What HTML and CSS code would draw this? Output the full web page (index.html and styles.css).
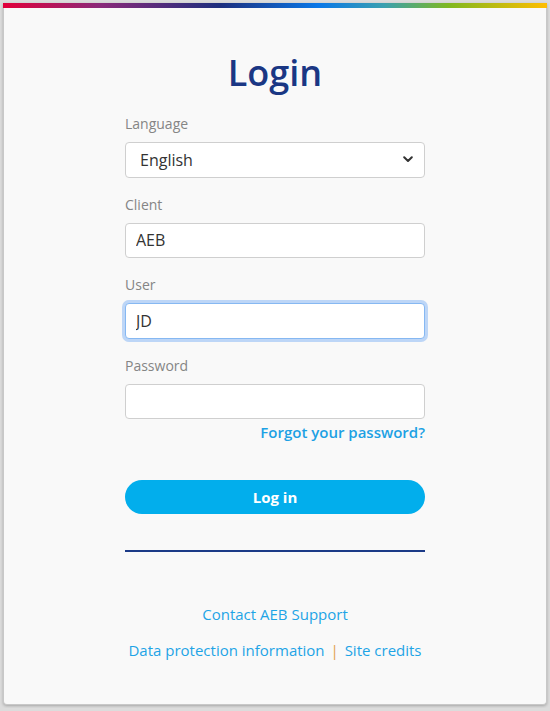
FILE: index.html
```html
<!DOCTYPE html>
<html lang="en">
<head>
  <meta charset="UTF-8" />
  <meta name="viewport" content="width=device-width, initial-scale=1.0" />
  <title>Login - AEB</title>
  <link rel="stylesheet" href="styles.css">
</head>
<body>

  <div class="login-card">
    <div class="rainbow"></div>

    <form class="login-form">
      <h1>Login</h1>

      <!-- Campos -->
      <div class="input-field">
        <label for="language">Language</label>
        <div class="select-wrap">
          <select id="language">
            <option>English</option>
            <option>Deutsch</option>
          </select>
          <svg class="chevron" width="10" height="7" viewBox="0 0 10 7">
            <path d="M1.2 1.2 L5 5 L8.8 1.2" fill="none" stroke="#333" stroke-width="2" stroke-linecap="round" stroke-linejoin="round"/>
          </svg>
        </div>
      </div>

      <div class="input-field">
        <label for="client">Client</label>
        <input type="text" id="client" value="AEB" />
      </div>

      <div class="input-field">
        <label for="user">User</label>
        <input type="text" id="user" class="focused" value="JD" />
      </div>

      <div class="input-field">
        <label for="password">Password</label>
        <input type="password" id="password" />
        <a href="#" class="forgot">Forgot your password?</a>
      </div>

      <button type="submit">Log in</button>

      <hr class="divider" />

      <div class="footer-links">
        <a href="#">Contact AEB Support</a>
        <div class="legal">
          <a href="#">Data protection information</a>
          <span class="sep">|</span>
          <a href="#">Site credits</a>
        </div>
      </div>
    </form>
  </div>

</body>
</html>
```

FILE: styles.css
```css
body {
  font-family: 'Open Sans', 'Liberation Sans', sans-serif;
  background-color: #dcdcdc;
  margin: 0;
  padding: 3px;
}
.login-card {
  background: #f9f9f9;
  border: 1px solid #c8c8c8;
  border-top: none;
  border-radius: 0 0 4px 4px;
  box-shadow: 0 1px 3px rgba(0, 0, 0, 0.25);
  height: 702px;
  box-sizing: border-box;
}
.rainbow {
  height: 5px;
  margin: 0 -1px;
  background: linear-gradient(to right, #e2003b 0%, #8a2a7a 18%, #1d2f7e 40%, #0a78e8 58%, #3aa0b0 70%, #80b820 82%, #ffbe00 100%);
}
.login-form {
  width: 300px;
  margin: 0 auto;
  padding-top: 40px;
}
h1 {
  color: #1a3784;
  font-size: 36px;
  font-weight: 600;
  line-height: 49px;
  margin: 0 0 17px;
  text-align: center;
}
.input-field {
  margin-bottom: 17px;
}
label {
  display: block;
  color: #858585;
  font-size: 14px;
  line-height: 20px;
  margin-bottom: 8px;
}
input, select {
  display: block;
  width: 100%;
  height: 35.5px;
  box-sizing: border-box;
  border: 1px solid #cfcfcf;
  border-radius: 4px;
  background: #fff;
  font-family: inherit;
  font-size: 16px;
  color: #333;
  padding: 0 10px;
  outline: none;
}
select {
  appearance: none;
  -webkit-appearance: none;
  padding-left: 14px;
}
.select-wrap {
  position: relative;
}
.chevron {
  position: absolute;
  right: 12px;
  top: 14px;
  pointer-events: none;
}
input.focused {
  border-color: #86b8f2;
  box-shadow: 0 0 0 3px rgba(130, 180, 245, 0.5);
}
.forgot {
  display: block;
  text-align: right;
  margin-top: 3px;
  font-size: 15px;
  line-height: 20px;
  font-weight: 600;
  color: #1da1e4;
  text-decoration: none;
}
button {
  display: block;
  width: 100%;
  height: 34px;
  margin-top: 38px;
  border: none;
  border-radius: 17px;
  background-color: #02aeec;
  color: white;
  font-family: inherit;
  font-size: 15px;
  font-weight: 700;
  cursor: pointer;
}
.divider {
  border: none;
  height: 1.5px;
  background: #1b3a87;
  margin: 36px 0 0;
}
.footer-links {
  text-align: center;
  padding-top: 51px;
  font-size: 15px;
  line-height: 22px;
  font-weight: 500;
}
.footer-links a {
  color: #1ea4e6;
  text-decoration: none;
}
.legal {
  margin-top: 14px;
}
.sep {
  color: #e0a050;
  margin: 0 2px;
}
```
